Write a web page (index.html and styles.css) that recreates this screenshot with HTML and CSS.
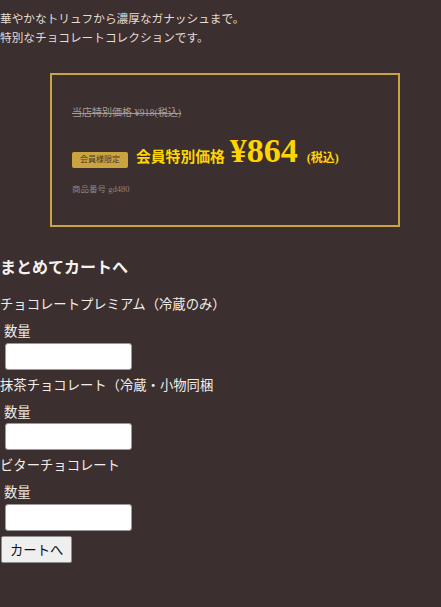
FILE: index.html
```html
<!DOCTYPE html>
<html lang="ja">
<head>
<meta charset="utf-8">
<title>チョコレートコレクション</title>
<link rel="stylesheet" href="styles.css">
</head>
<body>
<p class="intro">華やかなトリュフから濃厚なガナッシュまで。<br>特別なチョコレートコレクションです。</p>

<div class="price-box">
  <p class="old-price">当店特別価格 ¥918(税込)</p>
  <div class="price-row">
    <span class="badge">会員様限定</span>
    <span class="member-label">会員特別価格</span>
    <span class="price">¥864</span>
    <span class="tax">(税込)</span>
  </div>
  <p class="code">商品番号 gd480</p>
</div>

<form class="cart">
  <h3 class="cart-title">まとめてカートへ</h3>
  <div class="item">
    <div class="item-name">チョコレートプレミアム（冷蔵のみ）</div>
    <label class="qty-label">数量</label>
    <input class="qty" type="text">
  </div>
  <div class="item">
    <div class="item-name">抹茶チョコレート（冷蔵・小物同梱</div>
    <label class="qty-label">数量</label>
    <input class="qty" type="text">
  </div>
  <div class="item">
    <div class="item-name">ビターチョコレート</div>
    <label class="qty-label">数量</label>
    <input class="qty" type="text">
  </div>
  <button class="submit" type="button">カートへ</button>
</form>
</body>
</html>
```

FILE: styles.css
```css
html, body {
  margin: 0;
  padding: 0;
  background: #3b2f2f;
}
body {
  font-family: "Liberation Serif", "Noto Sans CJK JP", serif;
  font-size: 13.33px;
  color: #f2ede8;
  min-height: 607px;
}
.intro {
  margin: 0;
  padding-top: 10px;
  font-size: 11.67px;
  line-height: 19px;
  color: #e6ddd2;
}
.price-box {
  box-sizing: border-box;
  width: 350px;
  margin: 25px 0 0 50px;
  border: 2px solid #c9a441;
  padding: 31px 20px 30px;
  display: flex;
  flex-direction: column;
}
.old-price {
  margin: 0 0 15px;
  font-size: 10px;
  line-height: 14px;
  color: #a59d98;
  text-decoration: line-through;
}
.price-row {
  display: flex;
  align-items: baseline;
  height: 32px;
  margin-bottom: 16px;
}
.badge {
  display: inline-block;
  background: #c9a43f;
  color: #4a3a2c;
  font-size: 8px;
  line-height: 16px;
  padding: 0 8px;
  border-radius: 2px;
  margin-right: 8px;
}
.member-label {
  font-size: 14.8px;
  font-weight: bold;
  color: #ffd400;
  margin-right: 5px;
}
.price {
  font-size: 34px;
  line-height: 32px;
  font-weight: bold;
  color: #ffd400;
  margin-right: 9px;
}
.tax {
  font-size: 12px;
  font-weight: bold;
  color: #ffd400;
}
.code {
  margin: 0;
  font-size: 8.5px;
  line-height: 12px;
  color: #8c847f;
}
.cart {
  margin: 0;
  display: flex;
  flex-direction: column;
  align-items: flex-start;
}
.cart-title {
  margin: 31px 0 19px;
  font-size: 16px;
  line-height: 20px;
  font-weight: bold;
  color: #f5f2ee;
}
.item {
  display: flex;
  flex-direction: column;
  align-items: flex-start;
  margin-bottom: 8px;
}
.item-name {
  font-size: 13.33px;
  line-height: 16px;
  margin-bottom: 11px;
}
.qty-label {
  font-size: 13.33px;
  line-height: 16px;
  padding-left: 4px;
  margin-bottom: 2.5px;
}
.qty {
  box-sizing: border-box;
  width: 127px;
  height: 27px;
  margin: 0 0 0 5px;
  background: #fff;
  border: 1px solid #9a9a9a;
  border-radius: 3px;
}
.item:last-of-type {
  margin-bottom: 5px;
}
.submit {
  box-sizing: border-box;
  height: 27px;
  margin-left: 1px;
  padding: 0 8px;
  font-family: "Liberation Serif", "Noto Sans CJK JP", serif;
  font-size: 13.33px;
  color: #111;
  background: #efefef;
  border: 1px solid #8f8f8f;
  border-radius: 2px;
}
```
